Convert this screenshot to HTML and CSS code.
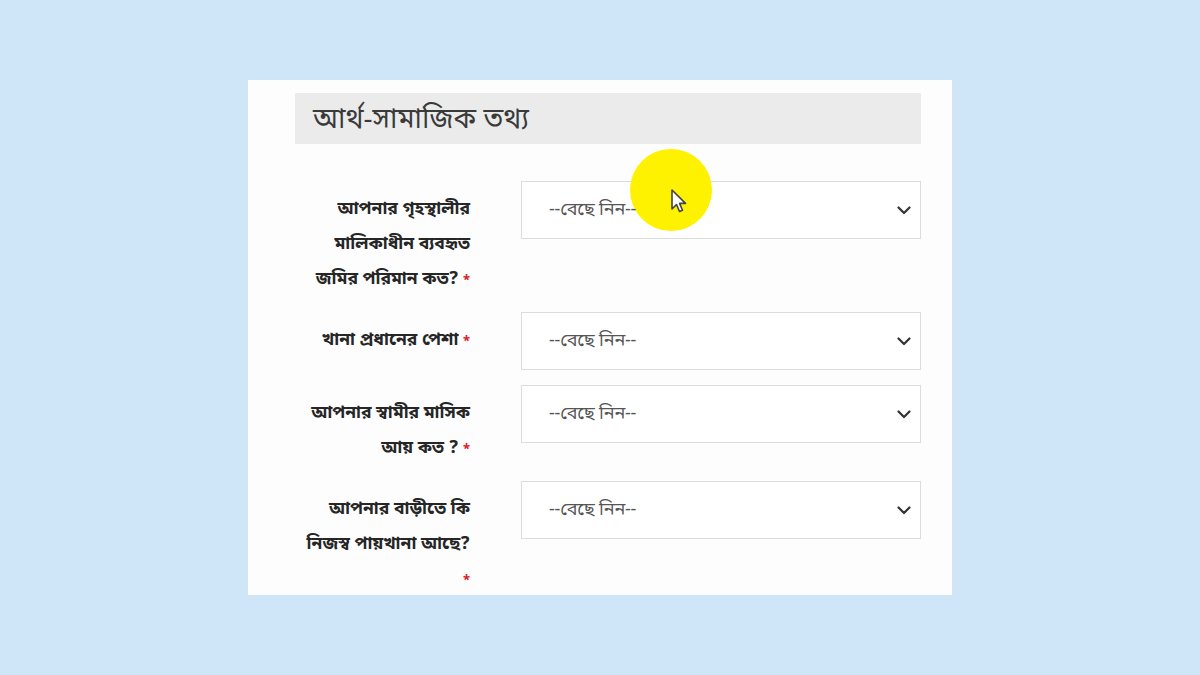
FILE: index.html
```html
<!DOCTYPE html>
<html lang="bn">
<head>
<meta charset="utf-8">
<title>আর্থ-সামাজিক তথ্য</title>
<link rel="stylesheet" href="styles.css">
</head>
<body>
<div class="stage">
  <div class="card">
    <div class="section-head">আর্থ-সামাজিক তথ্য</div>
    <div class="form">
      <div class="row">
        <div class="label">আপনার গৃহস্থালীর<br>মালিকাধীন ব্যবহৃত<br>জমির পরিমান কত? <span class="req">*</span></div>
        <div class="select first">
          <span class="ph">--বেছে নিন--</span>
          <svg class="chev" width="14" height="9" viewBox="0 0 14 9"><path d="M1.5 1.5 L7 7 L12.5 1.5" fill="none" stroke="#333" stroke-width="2.2" stroke-linecap="round" stroke-linejoin="round"/></svg>
          <span class="highlight"></span>
          <svg class="cursor" width="18" height="26" viewBox="0 0 18 26"><path d="M2 2 L2 21 L6.5 16.5 L9.5 23.5 L12.5 22.2 L9.6 15.4 L15.5 15.4 Z" fill="#fff" stroke="#444" stroke-width="1.6" stroke-linejoin="round"/></svg>
        </div>
      </div>
      <div class="row">
        <div class="label">খানা প্রধানের পেশা <span class="req">*</span></div>
        <div class="select">
          <span class="ph">--বেছে নিন--</span>
          <svg class="chev" width="14" height="9" viewBox="0 0 14 9"><path d="M1.5 1.5 L7 7 L12.5 1.5" fill="none" stroke="#333" stroke-width="2.2" stroke-linecap="round" stroke-linejoin="round"/></svg>
        </div>
      </div>
      <div class="row">
        <div class="label">আপনার স্বামীর মাসিক<br>আয় কত ? <span class="req">*</span></div>
        <div class="select">
          <span class="ph">--বেছে নিন--</span>
          <svg class="chev" width="14" height="9" viewBox="0 0 14 9"><path d="M1.5 1.5 L7 7 L12.5 1.5" fill="none" stroke="#333" stroke-width="2.2" stroke-linecap="round" stroke-linejoin="round"/></svg>
        </div>
      </div>
      <div class="row">
        <div class="label">আপনার বাড়ীতে কি<br>নিজস্ব পায়খানা আছে?<br><span class="req">*</span></div>
        <div class="select">
          <span class="ph">--বেছে নিন--</span>
          <svg class="chev" width="14" height="9" viewBox="0 0 14 9"><path d="M1.5 1.5 L7 7 L12.5 1.5" fill="none" stroke="#333" stroke-width="2.2" stroke-linecap="round" stroke-linejoin="round"/></svg>
        </div>
      </div>
    </div>
  </div>
</div>
</body>
</html>
```
FILE: styles.css
```css
html, body {
  margin: 0;
  padding: 0;
}
body {
  width: 1200px;
  height: 675px;
  background: #cfe6f8;
  font-family: "Noto Sans Bengali", "Noto Serif Bengali", "Lohit Bengali", "FreeSans", "Noto Sans", sans-serif;
  overflow: hidden;
}
.stage {
  display: flex;
  justify-content: center;
  padding-top: 80px;
}
.card {
  width: 704px;
  height: 515px;
  background: #fdfdfd;
  box-sizing: border-box;
  padding: 13px 31px 0 47px;
  overflow: hidden;
}
.section-head {
  height: 47px;
  padding-top: 4px;
  background: #ebebeb;
  color: #3a3a3a;
  font-size: 28px;
  line-height: 48px;
  padding-left: 18px;
  overflow: hidden;
}
.form {
  display: flex;
  flex-direction: column;
  gap: 15px;
  padding-top: 37px;
}
.row {
  display: flex;
  align-items: flex-start;
  gap: 51px;
}
.label {
  width: 175px;
  flex: none;
  text-align: right;
  font-weight: 700;
  font-size: 17.5px;
  line-height: 35px;
  color: #262626;
  padding-top: 11px;
}
.req {
  color: #d9202a;
  font-size: 13px;
  line-height: 1;
}
.select {
  position: relative;
  width: 400px;
  height: 58px;
  box-sizing: border-box;
  border: 1px solid #dcdcdc;
  display: flex;
  align-items: center;
  justify-content: space-between;
  padding: 0 9px 0 27px;
  background: #fff;
}
.ph {
  color: #555;
  font-size: 18px;
  letter-spacing: -0.2px;
  position: relative;
  z-index: 2;
}
.chev {
  display: block;
}
.highlight {
  position: absolute;
  left: 108px;
  top: -33px;
  width: 82px;
  height: 82px;
  border-radius: 50%;
  background: #fff200;
  z-index: 1;
}
.cursor {
  position: absolute;
  left: 148px;
  top: 6px;
  z-index: 3;
}
```
